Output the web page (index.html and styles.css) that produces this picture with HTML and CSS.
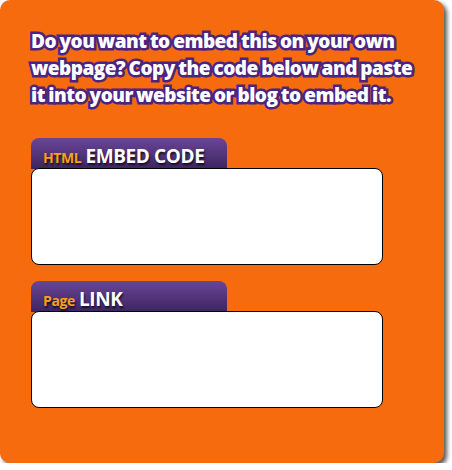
FILE: index.html
```html
<!DOCTYPE html>
<html lang="en">
<head>
    <meta charset="UTF-8">
    <title>Embed</title>
    <link rel="stylesheet" href="styles.css">
</head>
<body>

    <div class="panel">
        <p class="intro">Do you want to embed this on your own webpage? Copy the code below and paste it into your website or blog to embed it.</p>

        <!-- Embed code -->
        <div class="field">
            <div class="tab"><span class="tab-small">HTML</span> <span class="tab-big">EMBED CODE</span></div>
            <textarea class="box"></textarea>
        </div>

        <!-- Page link -->
        <div class="field">
            <div class="tab"><span class="tab-small">Page</span> <span class="tab-big">LINK</span></div>
            <textarea class="box"></textarea>
        </div>
    </div>

</body>
</html>
```

FILE: styles.css
```css
body {
    margin: 0;
    background: #ffffff;
    font-family: "Open Sans", Arial, sans-serif;
}
.panel {
    width: 444px;
    height: 463px;
    box-sizing: border-box;
    background: #f66b0e;
    border-radius: 10px;
    box-shadow: 3px 3px 4px rgba(0, 0, 0, 0.65);
    padding: 28px 16px 0 31px;
}
.intro {
    margin: 0 0 29px 0;
    font-size: 19px;
    font-weight: 800;
    line-height: 27px;
    letter-spacing: -0.5px;
    word-spacing: -1px;
    color: #ffffff;
    -webkit-text-stroke: 5px #4a2480;
    paint-order: stroke fill;
}
.field {
    margin-bottom: 16px;
}
.tab {
    width: 196px;
    height: 31px;
    box-sizing: border-box;
    padding: 5px 0 0 12px;
    border-radius: 8px 8px 0 0;
    background: linear-gradient(#6a4597, #3c2560);
    text-shadow: 1px 2px 2px rgba(0, 0, 0, 0.7);
    white-space: nowrap;
}
.tab-small {
    font-size: 14px;
    font-weight: 700;
    color: #f7a01c;
    letter-spacing: -0.4px;
}
.tab-big {
    font-size: 19px;
    font-weight: 700;
    color: #ffffff;
    letter-spacing: -0.4px;
}
.box {
    display: block;
    width: 352px;
    height: 97px;
    box-sizing: border-box;
    margin: -1px 0 0 0;
    border: 1px solid #000000;
    border-radius: 8px;
    background: #ffffff;
    resize: none;
    outline: none;
}
```
